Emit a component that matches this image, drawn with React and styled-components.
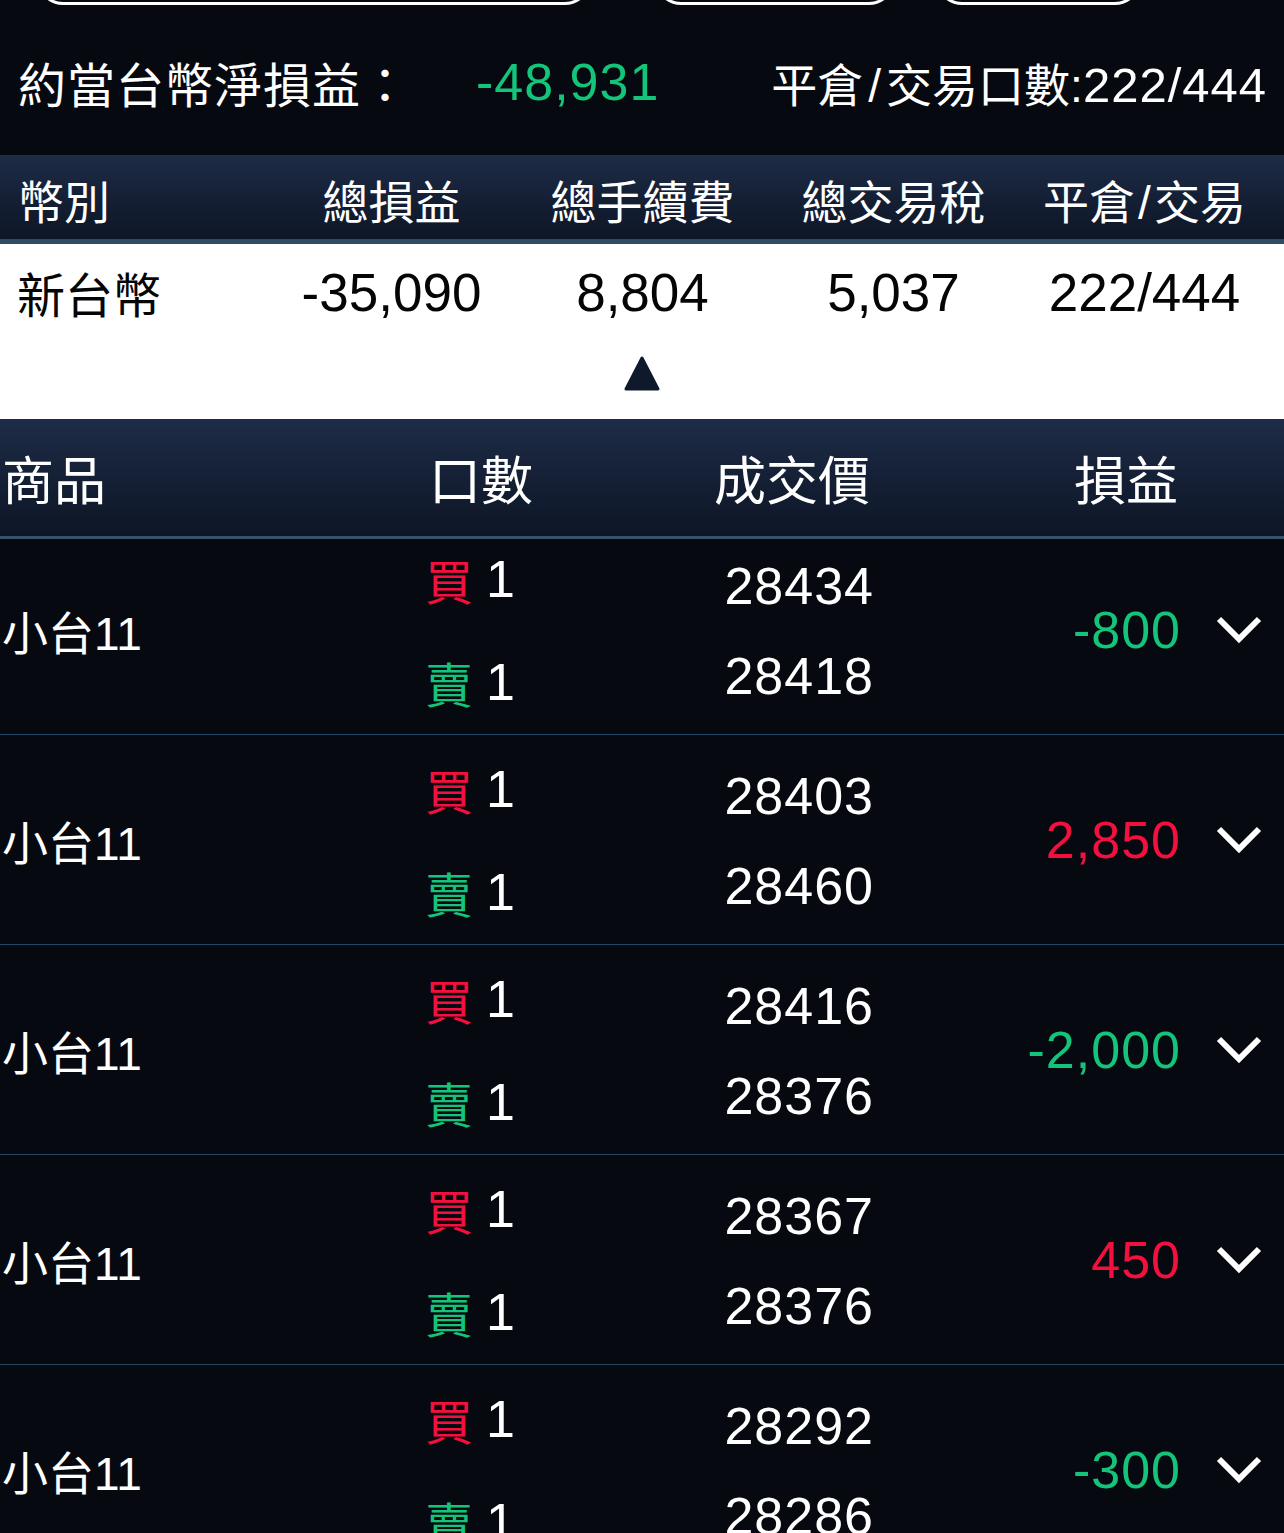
import React from 'react';
import styled, { createGlobalStyle } from 'styled-components';

const GREEN = '#14c47a';
const RED = '#f3103f';

const Global = createGlobalStyle`
  html, body { margin: 0; padding: 0; background: #060910; }
  body {
    font-family: "Liberation Sans", "Noto Sans CJK TC", sans-serif;
    color: #ffffff;
  }
  * { box-sizing: border-box; }
`;

const Page = styled.div`
  width: 1284px;
  height: 1533px;
  overflow: hidden;
  background: #060910;
  display: flex;
  flex-direction: column;
`;

const TopBar = styled.div`
  height: 5px;
  overflow: hidden;
  display: flex;
  align-items: flex-end;
  flex-shrink: 0;
`;

const TopButton = styled.div`
  flex-shrink: 0;
  height: 60px;
  width: ${(p) => p.$w}px;
  margin-left: ${(p) => p.$ml}px;
  border: 3px solid #ffffff;
  border-radius: 26px;
  align-self: flex-end;
`;

const Summary = styled.div`
  height: 150px;
  flex-shrink: 0;
  display: flex;
  align-items: center;
  padding: 4px 17px 0 18px;
`;

const SummaryLabel = styled.span`
  font-size: 48px;
  letter-spacing: 1px;
`;

const SummaryValue = styled.span`
  margin-left: 66px;
  font-size: 52px;
  letter-spacing: 1px;
  color: ${GREEN};
`;

const SummaryRight = styled.span`
  margin-left: auto;
  display: flex;
  align-items: baseline;
`;

const Cjk = styled.span`
  font-size: ${(p) => p.$size || 45}px;
`;

const Slash = styled.span`
  padding: 0 ${(p) => p.$pad || 4}px;
`;

const Num = styled.span`
  font-size: ${(p) => p.$size || 50}px;
  letter-spacing: 1px;
`;

const TotalsHeader = styled.div`
  flex-shrink: 0;
  height: 89px;
  display: grid;
  grid-template-columns: 266px repeat(4, 251px) 1fr;
  align-items: center;
  background: linear-gradient(180deg, #1d2c47 0%, #141f34 55%, #0e1626 100%);
  border-bottom: 5px solid #2f4c63;
  padding-top: 4px;
`;

const HeadCell = styled.div`
  font-size: 46px;
  text-align: ${(p) => (p.$left ? 'left' : 'center')};
  padding-left: ${(p) => (p.$left ? '18px' : '0')};
  white-space: nowrap;
`;

const WhitePanel = styled.div`
  flex-shrink: 0;
  height: 175px;
  background: #ffffff;
  color: #050505;
  display: flex;
  flex-direction: column;
`;

const TotalsRow = styled.div`
  height: 96px;
  display: grid;
  grid-template-columns: 266px repeat(4, 251px) 1fr;
  align-items: center;
`;

const TotalsCell = styled.div`
  font-size: ${(p) => (p.$left ? 48 : 53)}px;
  text-align: ${(p) => (p.$left ? 'left' : 'center')};
  padding-left: ${(p) => (p.$left ? '17px' : '0')};
  white-space: nowrap;
`;

const Toggle = styled.div`
  display: flex;
  justify-content: center;
  padding-top: 15px;
`;

const TradesHeader = styled.div`
  flex-shrink: 0;
  position: relative;
  z-index: 1;
  height: 120px;
  display: grid;
  grid-template-columns: 380px 202px 420px 248px 34px;
  align-items: center;
  background: linear-gradient(180deg, #1d2c47 0%, #141f34 55%, #0e1626 100%);
  border-bottom: 3px solid #34546d;
`;

const TradesHeadCell = styled.div`
  font-size: 52px;
  text-align: ${(p) => (p.$left ? 'left' : 'center')};
  padding-left: ${(p) => (p.$left ? '2px' : '0')};
  white-space: nowrap;
`;

const List = styled.div`
  margin-top: -14px;
  display: flex;
  flex-direction: column;
`;

const Row = styled.div`
  flex-shrink: 0;
  height: 210px;
  display: grid;
  grid-template-columns: 425px 175px 273px 307px 104px;
  align-items: center;
  border-bottom: 1px solid #264766;
`;

const Name = styled.div`
  font-size: 46px;
  padding-left: 2px;
  white-space: nowrap;
`;

const QtyCol = styled.div`
  display: flex;
  flex-direction: column;
  gap: 43px;
  padding-top: 2px;
`;

const QtyLine = styled.div`
  height: 60px;
  display: flex;
  align-items: center;
  gap: 13px;
`;

const Side = styled.span`
  font-size: 48px;
  color: ${(p) => (p.$buy ? RED : GREEN)};
`;

const Qty = styled.span`
  font-size: 52px;
`;

const PriceCol = styled.div`
  display: flex;
  flex-direction: column;
  align-items: flex-end;
  gap: 30px;
  padding-top: 2px;
`;

const Price = styled.div`
  height: 60px;
  line-height: 60px;
  font-size: 52px;
  letter-spacing: 1px;
  margin-right: -1px;
`;

const Pnl = styled.div`
  font-size: 52px;
  letter-spacing: 1px;
  text-align: right;
  margin-right: -1px;
  color: ${(p) => (p.$up ? RED : GREEN)};
`;

const ChevronWrap = styled.div`
  padding-left: 36px;
  display: flex;
  align-items: center;
`;

const Chevron = () => (
  <svg width="46" height="30" viewBox="0 0 46 30">
    <polyline
      points="3,4 23,24 43,4"
      fill="none"
      stroke="#ffffff"
      strokeWidth="6"
      strokeLinejoin="miter"
    />
  </svg>
);

const Triangle = () => (
  <svg width="38" height="38" viewBox="0 0 38 38">
    <polygon
      points="19,3 35,34 3,34"
      fill="#0f192c"
      stroke="#0f192c"
      strokeWidth="3"
      strokeLinejoin="round"
    />
  </svg>
);

const trades = [
  { buy: '28434', sell: '28418', pnl: '-800', up: false },
  { buy: '28403', sell: '28460', pnl: '2,850', up: true },
  { buy: '28416', sell: '28376', pnl: '-2,000', up: false },
  { buy: '28367', sell: '28376', pnl: '450', up: true },
  { buy: '28292', sell: '28286', pnl: '-300', up: false },
];

export default function App() {
  return (
    <>
      <Global />
      <Page>
        <TopBar>
          <TopButton $ml={37} $w={554} />
          <TopButton $ml={64} $w={240} />
          <TopButton $ml={41} $w={205} />
        </TopBar>

        <Summary>
          <SummaryLabel>約當台幣淨損益：</SummaryLabel>
          <SummaryValue>-48,931</SummaryValue>
          <SummaryRight>
            <Cjk $size={46}>
              平倉<Slash $pad={5}>/</Slash>交易口數:
            </Cjk>
            <Num $size={49}>222/444</Num>
          </SummaryRight>
        </Summary>

        <TotalsHeader>
          <HeadCell $left>幣別</HeadCell>
          <HeadCell>總損益</HeadCell>
          <HeadCell>總手續費</HeadCell>
          <HeadCell>總交易稅</HeadCell>
          <HeadCell>
            平倉<Slash $pad={3}>/</Slash>交易
          </HeadCell>
        </TotalsHeader>

        <WhitePanel>
          <TotalsRow>
            <TotalsCell $left>新台幣</TotalsCell>
            <TotalsCell>-35,090</TotalsCell>
            <TotalsCell>8,804</TotalsCell>
            <TotalsCell>5,037</TotalsCell>
            <TotalsCell>222/444</TotalsCell>
          </TotalsRow>
          <Toggle>
            <Triangle />
          </Toggle>
        </WhitePanel>

        <TradesHeader>
          <TradesHeadCell $left>商品</TradesHeadCell>
          <TradesHeadCell>口數</TradesHeadCell>
          <TradesHeadCell>成交價</TradesHeadCell>
          <TradesHeadCell>損益</TradesHeadCell>
        </TradesHeader>

        <List>
          {trades.map((t, i) => (
            <Row key={i}>
              <Name>小台11</Name>
              <QtyCol>
                <QtyLine>
                  <Side $buy>買</Side>
                  <Qty>1</Qty>
                </QtyLine>
                <QtyLine>
                  <Side>賣</Side>
                  <Qty>1</Qty>
                </QtyLine>
              </QtyCol>
              <PriceCol>
                <Price>{t.buy}</Price>
                <Price>{t.sell}</Price>
              </PriceCol>
              <Pnl $up={t.up}>{t.pnl}</Pnl>
              <ChevronWrap>
                <Chevron />
              </ChevronWrap>
            </Row>
          ))}
        </List>
      </Page>
    </>
  );
}
